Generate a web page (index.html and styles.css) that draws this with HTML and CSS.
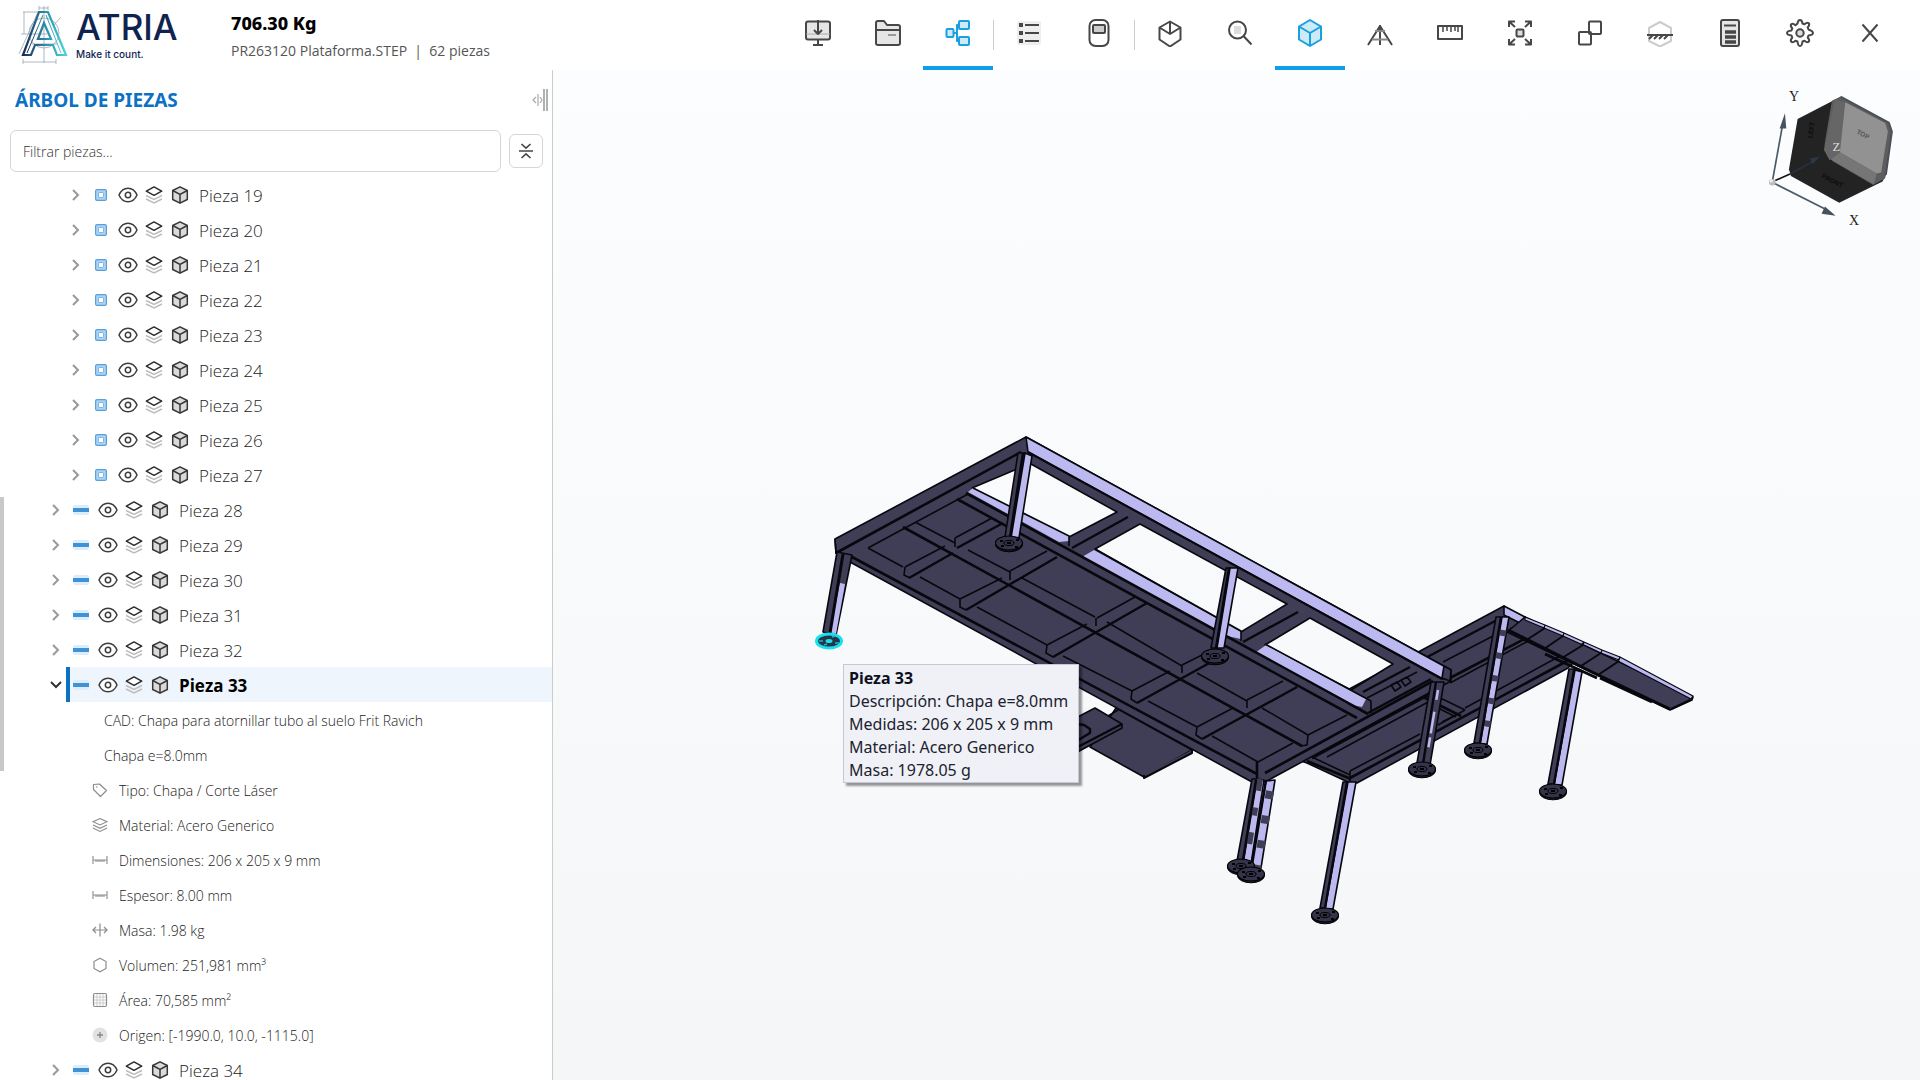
FILE: index.html
```html
<!DOCTYPE html>
<html lang="es">
<head>
<meta charset="utf-8">
<title>ATRIA – Plataforma</title>
<link rel="stylesheet" href="styles.css">
</head>
<body>
<svg class="sprite" aria-hidden="true">
  <symbol id="chev" viewBox="0 0 12 12"><path d="M3 1l5 5-5 5" fill="none" stroke="#999" stroke-width="2"/></symbol>
  <symbol id="chev-open" viewBox="0 0 12 12"><path d="M1 3l5 5 5-5" fill="none" stroke="#333" stroke-width="2"/></symbol>
  <symbol id="tube" viewBox="0 0 12 12"><rect x=".6" y=".6" width="10.8" height="10.8" rx="1.5" fill="#a9d3f7" stroke="#5b9fd6" stroke-width="1.2"/><rect x="3.5" y="3.5" width="5" height="5" rx=".6" fill="#fff" stroke="#7db6e6"/></symbol>
  <symbol id="plate" viewBox="0 0 16 10"><rect width="16" height="10" rx="2" fill="#dceefb"/><rect y="3" width="16" height="4" fill="#3f92d6"/></symbol>
  <symbol id="eye" viewBox="0 0 20 16"><path d="M1 8C5-1 15-1 19 8 15 17 5 17 1 8z" fill="#fff" stroke="#3c3c3c" stroke-width="1.5"/><circle cx="10" cy="8" r="2.7" fill="none" stroke="#3c3c3c" stroke-width="1.5"/></symbol>
  <symbol id="layers" viewBox="0 0 18 18"><path d="M1 9.500l8 4 8-4M1 13l8 4 8-4" fill="none" stroke="#bdbdbd" stroke-width="1.400"/><path d="M9 .9l7.700 4.300L9 9.300 1.300 5.200z" fill="#fff" stroke="#2c2c2c" stroke-width="1.500" stroke-linejoin="round"/></symbol>
  <symbol id="cube" viewBox="0 0 18 18"><path d="M9 .8l7.300 3.700v9L9 17.200l-7.300-3.700v-9z" fill="#dadada" stroke="#363636" stroke-width="1.500" stroke-linejoin="round"/><path d="M1.700 4.500L9 8.300l7.300-3.800M9 8.300v8.900" fill="none" stroke="#363636" stroke-width="1.500"/></symbol>
  <symbol id="tag" viewBox="0 0 16 16"><path d="M1.500 2.500v5l7 7 6-6-7-6.500z" fill="none" stroke="#8c8c8c" stroke-width="1.200" stroke-linejoin="round"/><circle cx="4.800" cy="5" r=".7" fill="#8c8c8c"/></symbol>
  <symbol id="stack" viewBox="0 0 16 16"><path d="M8 1.500l7 3.200-7 3.300-7-3.300zM1 8l7 3.300L15 8M1 11l7 3.500 7-3.500" fill="none" stroke="#8c8c8c" stroke-width="1.100"/></symbol>
  <symbol id="dim" viewBox="0 0 16 16"><path d="M1 4v8M15 4v8M1 8h14M4 8v2M6 8v2M8 8v2M10 8v2M12 8v2" fill="none" stroke="#8c8c8c" stroke-width="1.100"/></symbol>
  <symbol id="mass" viewBox="0 0 16 16"><path d="M8 1.500v13M1 8h14M4 5L1 8l3 3M12 5l3 3-3 3" fill="none" stroke="#8c8c8c" stroke-width="1.200"/></symbol>
  <symbol id="hex" viewBox="0 0 16 16"><path d="M8 1.200l6 3.300v7l-6 3.300-6-3.300v-7z" fill="none" stroke="#8c8c8c" stroke-width="1.200"/></symbol>
  <symbol id="grid" viewBox="0 0 16 16"><path d="M5 2v12M8 2v12M11 2v12M2 5h12M2 8h12M2 11h12" stroke="#ccc" stroke-width="1"/><rect x="1.500" y="1.500" width="13" height="13" rx="1.500" fill="none" stroke="#8c8c8c" stroke-width="1.200"/></symbol>
  <symbol id="origin" viewBox="0 0 16 16"><circle cx="8" cy="8" r="7.500" fill="#e2e2e2"/><path d="M8 5v6M5 8h6" stroke="#888" stroke-width="1.300"/></symbol>
  <symbol id="flange" viewBox="-16 -10 32 20"><ellipse cy="1.500" rx="13.500" ry="7.300" fill="#1b1a2a" stroke="#000"/><ellipse rx="13.500" ry="7" fill="#35334a" stroke="#000" stroke-width="1.200"/><ellipse rx="5" ry="2.500" fill="none" stroke="#000"/><path d="M-2 0h4M-9-2h3M7-3h3M-8 3h3M6 4h3" stroke="#000" stroke-width="2"/></symbol>
</svg>

<header class="topbar">
  <a class="brand" href="#" aria-label="ATRIA">
    <svg class="mark" viewBox="0 0 50 58" fill="none">
      <defs><linearGradient id="lg" x1="0" x2="1"><stop offset="0" stop-color="#1d2c55"/><stop offset=".5" stop-color="#2b8aa8"/><stop offset="1" stop-color="#4ed3da"/></linearGradient></defs>
      <g stroke="#9aa5b2" stroke-width=".8"><path d="M5 6h17M6 6v22M3 28h26M26 0v57M21 2h9M21 0v4M30 0v4M5 53v5M38 53v5M5 56h33M1 48L20 6M14 38h26M43 11L35 20"/><circle cx="26" cy="27" r="15"/></g>
      <path d="M21 6h9l18 43h-9l-4-10H17l-4 10H5zM26 17l-6 16h13z" stroke="url(#lg)" stroke-width="2.200"/>
      <path d="M25 9L9 47M28 9l15 38" stroke="url(#lg)"/>
    </svg>
    <span class="wordmark"><strong>ATRIA</strong><small>Make it count.</small></span>
  </a>
  <div class="summary"><h1>706.30 Kg</h1><p>PR263120 Plataforma.STEP&nbsp; |&nbsp; 62 piezas</p></div>
  <nav class="tools">
    <button aria-label="Importar"><svg viewBox="0 0 28 28"><rect x="2" y="2.500" width="24" height="18" rx="2" fill="#e6e6e6"/><path d="M2 15h24" stroke="#aaa" stroke-width="1"/><path d="M14 1v14M10 11l4 4 4-4M14 21v5M9 26h10"/></svg></button>
    <button aria-label="Abrir"><svg viewBox="0 0 28 28"><path d="M2 4q0-2 2-2h6l3 4h11q2 0 2 2v16q0 2-2 2H4q-2 0-2-2z" fill="#e6e6e6"/><path d="M2 11h24"/><path d="M14 16h8" stroke="#999"/></svg></button>
    <button class="on" aria-label="Árbol"><svg viewBox="0 0 28 28"><g fill="#cdeaf9"><rect x="2.500" y="10" width="7" height="8" rx="1"/><rect x="15" y="2" width="10" height="8" rx="1"/><rect x="15" y="18" width="10" height="8" rx="1"/></g><path d="M9 14h4M15 6h-2v16h2"/></svg></button>
    <i></i>
    <button aria-label="Lista"><svg viewBox="0 0 28 28"><rect x="2" y="2" width="24" height="24" rx="2" fill="#eee" stroke="none"/><path d="M10 6h14M10 14h14M10 22h14"/><path d="M4 6h4M4 14h4M4 22h4" stroke-width="4"/></svg></button>
    <button aria-label="Báscula"><svg viewBox="0 0 28 28"><rect x="4.500" y="1" width="19" height="26" rx="6"/><rect x="8" y="6" width="12" height="8" rx="1" fill="#ccc"/></svg></button>
    <i></i>
    <button aria-label="Vista 3D"><svg viewBox="0 0 28 28"><path d="M14 2.500l10.500 6v12L14 27.500 3.500 20.500v-12zM3.500 8.500L14 15l10.500-6.500M14 2.500V15"/></svg></button>
    <button aria-label="Buscar"><svg viewBox="0 0 28 28"><rect x="8" y="7" width="7" height="8" fill="#ddd" stroke="none"/><circle cx="11.500" cy="11" r="8.500"/><path d="M17.500 17l8 8.500"/></svg></button>
    <button class="on" aria-label="Cubo"><svg viewBox="0 0 28 28"><path d="M14 1l11 6.500v13L14 27 3 20.500v-13z" fill="#cdeaf9"/><path d="M3 7.500L14 14l11-6.500M14 14v13"/></svg></button>
    <button aria-label="Perspectiva"><svg viewBox="0 0 28 28"><path d="M14 6v20M14 7L2 26M14 7l12 19"/><path d="M6 20.500h16M9 12h10" stroke="#888"/></svg></button>
    <button aria-label="Medir"><svg viewBox="0 0 28 28"><rect x="2" y="7" width="24" height="13"/><path d="M7 7v6M11 7v5M15 7v6M19 7v5M22 7v6" stroke-width="1.500"/></svg></button>
    <button aria-label="Ajustar"><svg viewBox="0 0 28 28"><rect x="10.500" y="10.500" width="7" height="7" rx="1" fill="#ddd"/><path d="M9 8L3 2.500M3 8V2.500h6M19 8l6-5.500M19 2.500h6V8M9 20l-6 5.500M3 20v5.500h6M19 20l6 5.500M25 20v5.500h-6"/></svg></button>
    <button aria-label="Explosionar"><svg viewBox="0 0 28 28"><rect x="13" y="2.500" width="12" height="12.500" rx="1"/><rect x="3" y="13" width="12" height="12.500" rx="1"/></svg></button>
    <button aria-label="Sección"><svg viewBox="0 0 28 28"><path d="M14 3l11 6v13l-11 5.500L3 22V9z" stroke="#ccc"/><path d="M1 16h26M3 20l4-4M8 20l4-4M13 20l4-4M18 20l4-4"/></svg></button>
    <button aria-label="Calcular"><svg viewBox="0 0 28 28"><rect x="5" y="1" width="18" height="26" rx="2" fill="#e6e6e6"/><path d="M8 6.500h12"/><path d="M9 13h11M9 18h11M9 23h11" stroke-width="3.500"/></svg></button>
    <button aria-label="Ajustes"><svg viewBox="0 0 28 28"><path d="M11.500 4.500Q12 1 14 1t2.500 3.500l2 .8q2.800-2.400 4.200-1t-1 4.200l.8 2Q27 12 27 14t-4.500 2.500l-.8 2q2.400 2.800 1 4.200t-4.200-1l-2 .8Q16 27 14 27t-2.500-4.500l-2-.8q-2.800 2.400-4.200 1t1-4.200l-.8-2Q1 16 1 14t4.500-2.500l.8-2q-2.400-2.800-1-4.200t4.200 1z"/><circle cx="14" cy="14" r="3.700" fill="#ddd"/></svg></button>
    <button aria-label="Cerrar"><svg viewBox="0 0 28 28"><path d="M6.500 5.500l15 17M21.500 5.500l-15 17"/></svg></button>
  </nav>
</header>

<main class="work">
  <aside class="panel">
    <div class="panel-head"><h2>ÁRBOL DE PIEZAS</h2>
      <svg class="grip" viewBox="0 0 16 24"><path d="M4 9L1 12l3 3M6 6v12M8 9l2 3-2 3" fill="none" stroke="#aaa" stroke-width="1.200"/><path d="M12 1v22M15 1v22" stroke="#b0b0b0" stroke-width="2"/></svg></div>
    <div class="filter">
      <input type="text" placeholder="Filtrar piezas..." aria-label="Filtrar piezas">
      <button aria-label="Contraer todo"><svg viewBox="0 0 16 16"><path d="M1 8h14M3.500 1L8 5.200 12.500 1M3.500 15L8 10.800l4.500 4.200" fill="none" stroke="#444" stroke-width="1.600"/></svg></button>
    </div>
    <div class="scroll"></div>
    <ul class="tree">
      <li class="row deep"><button class="tw" aria-label="Expandir"><svg><use href="#chev"/></svg></button><span class="item"><svg class="type"><use href="#tube"/></svg><svg class="eye"><use href="#eye"/></svg><svg class="ic"><use href="#layers"/></svg><svg class="ic"><use href="#cube"/></svg><span class="name">Pieza 19</span></span></li>
      <li class="row deep"><button class="tw" aria-label="Expandir"><svg><use href="#chev"/></svg></button><span class="item"><svg class="type"><use href="#tube"/></svg><svg class="eye"><use href="#eye"/></svg><svg class="ic"><use href="#layers"/></svg><svg class="ic"><use href="#cube"/></svg><span class="name">Pieza 20</span></span></li>
      <li class="row deep"><button class="tw" aria-label="Expandir"><svg><use href="#chev"/></svg></button><span class="item"><svg class="type"><use href="#tube"/></svg><svg class="eye"><use href="#eye"/></svg><svg class="ic"><use href="#layers"/></svg><svg class="ic"><use href="#cube"/></svg><span class="name">Pieza 21</span></span></li>
      <li class="row deep"><button class="tw" aria-label="Expandir"><svg><use href="#chev"/></svg></button><span class="item"><svg class="type"><use href="#tube"/></svg><svg class="eye"><use href="#eye"/></svg><svg class="ic"><use href="#layers"/></svg><svg class="ic"><use href="#cube"/></svg><span class="name">Pieza 22</span></span></li>
      <li class="row deep"><button class="tw" aria-label="Expandir"><svg><use href="#chev"/></svg></button><span class="item"><svg class="type"><use href="#tube"/></svg><svg class="eye"><use href="#eye"/></svg><svg class="ic"><use href="#layers"/></svg><svg class="ic"><use href="#cube"/></svg><span class="name">Pieza 23</span></span></li>
      <li class="row deep"><button class="tw" aria-label="Expandir"><svg><use href="#chev"/></svg></button><span class="item"><svg class="type"><use href="#tube"/></svg><svg class="eye"><use href="#eye"/></svg><svg class="ic"><use href="#layers"/></svg><svg class="ic"><use href="#cube"/></svg><span class="name">Pieza 24</span></span></li>
      <li class="row deep"><button class="tw" aria-label="Expandir"><svg><use href="#chev"/></svg></button><span class="item"><svg class="type"><use href="#tube"/></svg><svg class="eye"><use href="#eye"/></svg><svg class="ic"><use href="#layers"/></svg><svg class="ic"><use href="#cube"/></svg><span class="name">Pieza 25</span></span></li>
      <li class="row deep"><button class="tw" aria-label="Expandir"><svg><use href="#chev"/></svg></button><span class="item"><svg class="type"><use href="#tube"/></svg><svg class="eye"><use href="#eye"/></svg><svg class="ic"><use href="#layers"/></svg><svg class="ic"><use href="#cube"/></svg><span class="name">Pieza 26</span></span></li>
      <li class="row deep"><button class="tw" aria-label="Expandir"><svg><use href="#chev"/></svg></button><span class="item"><svg class="type"><use href="#tube"/></svg><svg class="eye"><use href="#eye"/></svg><svg class="ic"><use href="#layers"/></svg><svg class="ic"><use href="#cube"/></svg><span class="name">Pieza 27</span></span></li>
      <li class="row"><button class="tw" aria-label="Expandir"><svg><use href="#chev"/></svg></button><span class="item"><svg class="type flat"><use href="#plate"/></svg><svg class="eye"><use href="#eye"/></svg><svg class="ic"><use href="#layers"/></svg><svg class="ic"><use href="#cube"/></svg><span class="name">Pieza 28</span></span></li>
      <li class="row"><button class="tw" aria-label="Expandir"><svg><use href="#chev"/></svg></button><span class="item"><svg class="type flat"><use href="#plate"/></svg><svg class="eye"><use href="#eye"/></svg><svg class="ic"><use href="#layers"/></svg><svg class="ic"><use href="#cube"/></svg><span class="name">Pieza 29</span></span></li>
      <li class="row"><button class="tw" aria-label="Expandir"><svg><use href="#chev"/></svg></button><span class="item"><svg class="type flat"><use href="#plate"/></svg><svg class="eye"><use href="#eye"/></svg><svg class="ic"><use href="#layers"/></svg><svg class="ic"><use href="#cube"/></svg><span class="name">Pieza 30</span></span></li>
      <li class="row"><button class="tw" aria-label="Expandir"><svg><use href="#chev"/></svg></button><span class="item"><svg class="type flat"><use href="#plate"/></svg><svg class="eye"><use href="#eye"/></svg><svg class="ic"><use href="#layers"/></svg><svg class="ic"><use href="#cube"/></svg><span class="name">Pieza 31</span></span></li>
      <li class="row"><button class="tw" aria-label="Expandir"><svg><use href="#chev"/></svg></button><span class="item"><svg class="type flat"><use href="#plate"/></svg><svg class="eye"><use href="#eye"/></svg><svg class="ic"><use href="#layers"/></svg><svg class="ic"><use href="#cube"/></svg><span class="name">Pieza 32</span></span></li>
      <li class="row sel"><button class="tw" aria-label="Contraer"><svg><use href="#chev-open"/></svg></button><span class="item"><svg class="type flat"><use href="#plate"/></svg><svg class="eye"><use href="#eye"/></svg><svg class="ic"><use href="#layers"/></svg><svg class="ic"><use href="#cube"/></svg><span class="name">Pieza 33</span></span></li>
      <li class="note">CAD: Chapa para atornillar tubo al suelo Frit Ravich<br>Chapa e=8.0mm</li>
      <li class="prop"><svg><use href="#tag"/></svg>Tipo: Chapa / Corte Láser</li>
      <li class="prop"><svg><use href="#stack"/></svg>Material: Acero Generico</li>
      <li class="prop"><svg><use href="#dim"/></svg>Dimensiones: 206 x 205 x 9 mm</li>
      <li class="prop"><svg><use href="#dim"/></svg>Espesor: 8.00 mm</li>
      <li class="prop"><svg><use href="#mass"/></svg>Masa: 1.98 kg</li>
      <li class="prop"><svg><use href="#hex"/></svg>Volumen: 251,981 mm³</li>
      <li class="prop"><svg><use href="#grid"/></svg>Área: 70,585 mm²</li>
      <li class="prop"><svg><use href="#origin"/></svg>Origen: [-1990.0, 10.0, -1115.0]</li>
      <li class="row"><button class="tw" aria-label="Expandir"><svg><use href="#chev"/></svg></button><span class="item"><svg class="type flat"><use href="#plate"/></svg><svg class="eye"><use href="#eye"/></svg><svg class="ic"><use href="#layers"/></svg><svg class="ic"><use href="#cube"/></svg><span class="name">Pieza 34</span></span></li>
    </ul>
  </aside>

  <section class="view">
    <svg class="scene" viewBox="553 70 1367 1010" preserveAspectRatio="xMidYMid meet">
      <g stroke="#07070d" stroke-width="1.600" stroke-linejoin="round" fill="#403e56">
        <!-- lower step -->
        <path d="M1116 708l76 42-48 27-54-30z"/><path d="M1192 750v3l-48 25v-3" stroke-width="2"/>
        <path d="M1095 708l27 16v4l-52 28v-35z"/><path d="M1122 724l-52 27M1070 723l14 2 6 4v4l-20 12" stroke-width="2.400" fill="none"/><path d="M1108 716l10-6" fill="none"/>
        <!-- secondary platform -->
        <path d="M1504 606L1340 694l-54 62 21 7 43 20h7l211-115 20-20-80-36z"/>
        <g fill="none"><path d="M1497 620L1352 697" stroke-width="2.400"/>
        <path d="M1443 662l52-27M1350 771l70-37M1438 725l27-15M1465 708l95-52M1327 757l103-56M1350 771v10M1312 757l38 18M1450 683l80-43M1430 693l35 17M1430 704l26 13"/>
        <path d="M1307 761l44 18M1312 758l118-64M1350 778l217-117M1423 697l38 19M1450 678l80-42" stroke-width="2.600"/><path d="M1442 722l14-7M1510 628l20 10" /></g>
        <!-- main platform and railing -->
        <path fill-rule="evenodd" d="M835 539L1026 437 1451 670v11L1265 782h-13L850 562l-14-9zM972 488L1017 469 1031 464 1117 512 1069 537zM1140 524L1287 604 1241 632 1095 549zM1310 618L1393 664 1351 690 1265 645z"/>
        <path fill="#bcb9f0" d="M1026 437L1451 670 1443 679 1028 452z"/>
        <path d="M1444 666l7 4-1 11-8-3z"/>
        <g fill="#bcb9f0" stroke="none"><path d="M973 488l96 48v5l-10 1-91-50zM1094 550l147 82v7l-14-3-145-79zM1266 645l100 54-4 8-15-3-92-51z"/></g>
        <g fill="none">
          <path d="M973 488l96 48v10M1095 549l146 82v10M1265 644l106 57v12"/>
          <path stroke-width="2.600" d="M966 493l402 221M957 499l400 219M836 553L1021 452M852 557l405 217M903 527l399 219M1265 773l168-92M1257 762v18"/>
          <path stroke-width="2" d="M1028 452l414 227"/>
          <path d="M835 539l1 15M868 548l100-54M868 548l35 19M920 577l40 22M977 607l70 38M1063 656l69 35M1148 701l49 26M1212 736l46 26M915 522l40 21M968 550l42 22M1022 578l73 39M1107 622l75 44M1197 673l50 28M1262 708l46 27M1258 762l35-19M1308 735l39-20"/>
          <path d="M905 567l40-21M955 538l37-20M960 599l42-21M1010 571l37-20M1047 645l40-21M1097 618l38-21M1132 691l38-20M1182 665l24-12M1197 727l36-19M1247 700l36-19M955 538v9M1010 571v9M1096 618v8M1182 665v8M1247 700v8M1308 735l-1 10-6 1M905 567l-1 8 6 3M960 599v8l6 3M1047 645l-1 8 7 4M1132 691l-1 8 6 4M1197 727l-1 8 6 4"/>
          <path stroke-width="2.400" d="M909 578l44-25M957 548l46-25M966 610l91-53M1053 657l94-54M1137 703l76-42M1202 739l95-52M1072 548l56-31M1243 642l55-30M1363 692l47-25M1368 713l63-34"/>
          <path d="M1367 698l50-26M1391 685l6-3 4 5-6 4zM1401 680l6-3 4 5-6 4z"/>
        </g>
        <!-- ramp -->
        <path fill="#bcb9f0" d="M1504 606l21 11-5 6-16-8z"/>
        <path d="M1525 617l168 80-1 3-22 10-163-78z"/>
        <path fill="#bcb9f0" stroke-width="1.200" d="M1525 617l20 8-1 3-19-8zM1545 625l19 8-1 3-19-8zM1564 633l20 9-1 3-20-9zM1584 642l18 8-1 3-19-9zM1602 650l18 7-1 3-18-7zM1620 657l73 39-2 3-73-38z"/>
        <path fill="none" d="M1545 628l-20 13M1563 636l-19 13M1583 645l-21 13M1601 653l-20 13M1619 661l-21 14M1690 700l-19 9" stroke-width="2"/>
        <path fill="none" stroke-width="3" d="M1508 630l84 42 78 37"/><path d="M1545 654l52 24M1600 678l52 24" stroke-width="3"/>
        <!-- legs -->
        <path d="M837 552l-14 80 13 3 16-80z"/><path fill="#bcb9f0" stroke="none" d="M840 583l5 1-9 50-6-2z"/><path d="M843 554l-13 79" stroke-width="3"/>
        <path d="M1018 453l-13 84 7 1 13-85z"/><path fill="#bcb9f0" d="M1025 453l7 3-13 82h-8z"/><path d="M1023 453l-13 84" stroke-width="2.400"/>
        <path d="M1226 568l-15 80h6l13-80z"/><path fill="#bcb9f0" d="M1230 568h8l-14 80h-7z"/><path d="M1229 568l-13 80" stroke-width="2.400"/>
        <path d="M1431 682l-14 81 13 2 14-83z"/><path d="M1436 682l-13 82" stroke-width="2.400"/><path d="M1438 690l-10 60" stroke="#bcb9f0" stroke-width="2.500" stroke-dasharray="10 12 22 4"/>
        <path d="M1496 617l-22 126h6l22-126z"/><path fill="#bcb9f0" d="M1502 617h7l-22 127h-7z"/><path d="M1503 630l-19 112" stroke="#403e56" stroke-width="7" stroke-dasharray="6 17"/><path d="M1501 617l-21 126" stroke-width="2.400"/>
        <path d="M1569 669l-21 115h6l21-115z"/><path fill="#bcb9f0" d="M1575 670l7 2-20 113h-8z"/><path d="M1574 670l-20 114" stroke-width="2.400"/>
        <path d="M1343 782l-23 126h6l23-126z"/><path fill="#bcb9f0" d="M1348 782h8l-23 127h-8z"/><path d="M1347 782l-22 126" stroke-width="2.400"/>
        <path d="M1252 779l-15 82h7l14-82z"/><path fill="#bcb9f0" d="M1257 779l7 1-13 84h-8z"/><path d="M1260 779l-14 84" stroke="#403e56" stroke-width="6" stroke-dasharray="12 17 8 17"/>
        <path fill="#bcb9f0" d="M1266 781l9-1-14 88-10-2z"/><path d="M1270 791l-13 78" stroke="#403e56" stroke-width="8" stroke-dasharray="8 17"/><path d="M1256 780l-13 80M1266 780l-14 85" stroke-width="2.400"/>
      </g>
      <g>
        <use href="#flange" x="993" y="533" width="32" height="20"/><use href="#flange" x="1199" y="646" width="32" height="20"/><use href="#flange" x="1406" y="759" width="32" height="20"/><use href="#flange" x="1462" y="740" width="32" height="20"/><use href="#flange" x="1537" y="781" width="32" height="20"/><use href="#flange" x="1309" y="905" width="32" height="20"/><use href="#flange" x="1225" y="856" width="32" height="20"/><use href="#flange" x="1235" y="864" width="32" height="20"/>
        <ellipse cx="829" cy="641" rx="12.500" ry="7" fill="#25364a" stroke="#18e0ee" stroke-width="3"/><ellipse cx="829" cy="641" rx="3.500" ry="2" fill="#18e0ee"/><path d="M819 641h4M835 643h4M824 645l3-1M832 637l3-1" stroke="#18b8c8" stroke-width="1.500"/>
      </g>
      <!-- orientation cube -->
      <g transform="translate(1740 70) scale(.333)">
        <path d="M173 147L302 80l145 78 9 27-18 130-10 20-130 64-145-81-6-20z" fill="#232323"/>
        <path d="M276 92l26-12 145 78 9 27-20 140-36 20-120-70-28-35 4-30z" fill="#5d5d5d"/>
        <path d="M285 88l30 10-14 145-32 28-16-30z" fill="#666"/>
        <path d="M316 97l120 62 8 26-20 123-14 3-110-64z" fill="#929292"/>
        <path d="M300 247l110 64-8 32-130-74z" fill="#767676"/>
        <path d="M302 80l145 78 9 27-18 130" fill="none" stroke="#4b5058" stroke-width="6"/>
        <text class="face" transform="translate(348 190) rotate(28)">TOP</text>
        <text class="face dark" transform="translate(244 322) rotate(28)">FRONT</text>
        <text class="face dark" transform="translate(216 206) rotate(-80)">LEFT</text>
        <g stroke="#4c5a68" stroke-width="5" fill="#3f4b57"><path d="M98 330l29-160"/><path d="M104 341l150 76"/><path d="M106 332l44-20" stroke="#111"/><path d="M150 312l70-38" stroke="#27323d"/></g>
        <path d="M135 130l4 46h-20zM287 438l-42-6 10-22z" fill="#46525f"/><path d="M240 260l-30 6 8 18z" fill="#2c3844"/>
        <circle cx="97" cy="337" r="10" fill="#bbb"/><circle cx="94" cy="333" r="5" fill="#eee"/>
        <text class="axis" x="147" y="92">Y</text><text class="axis" x="327" y="464">X</text><text class="axis z" x="278" y="243">Z</text>
      </g>
    </svg>
    <div class="tip" role="tooltip"><b>Pieza 33</b><br>Descripción: Chapa e=8.0mm<br>Medidas: 206 x 205 x 9 mm<br>Material: Acero Generico<br>Masa: 1978.05 g</div>
  </section>
</main>
</body>
</html>
```
FILE: styles.css
```css
* { box-sizing: border-box; }
body { margin: 0; height: 100vh; display: flex; flex-direction: column; overflow: hidden; background: #fff; color: #333; font-family: "Open Sans", "Noto Sans", sans-serif; }
.sprite { display: none; }
button { background: none; border: 0; padding: 0; font: inherit; }
h1, h2, p, ul { margin: 0; padding: 0; }
ul { list-style: none; }

.topbar { flex: none; height: 70px; display: flex; align-items: center; padding: 0 15px 0 18px; }
.brand { display: flex; align-items: center; width: 213px; gap: 8px; text-decoration: none; color: #0f2350; font-family: Inter, sans-serif; }
.mark { width: 50px; height: 58px; }
.wordmark { display: flex; flex-direction: column; }
.wordmark strong { font-size: 35px; line-height: 42px; font-weight: 500; }
.wordmark small { font-size: 10px; line-height: 12px; font-weight: 500; margin-bottom: 4px; }
.summary { flex: 1; padding-top: 4px; }
.summary h1 { font-size: 18px; line-height: 28px; color: #000; font-family: "Noto Sans", sans-serif; font-weight: 800; }
.summary p { font-size: 14px; line-height: 28px; color: #555; }
.tools { display: flex; height: 70px; align-items: stretch; }
.tools i { width: 1px; height: 30px; margin-top: 20px; background: #ccc; }
.tools button { width: 70px; padding-top: 19px; border-bottom: 4px solid transparent; display: flex; justify-content: center; }
.tools svg { width: 28px; height: 28px; fill: none; stroke: #474747; stroke-width: 2; stroke-linejoin: round; }
.tools .on { border-color: #0f9fe8; }
.tools .on svg { stroke: #1a9fdf; }

.work { flex: 1; min-height: 0; display: flex; }
.panel { position: relative; flex: none; width: 553px; border-right: 1px solid #ccc; overflow: hidden; }
.panel-head { height: 60px; padding: 0 4px 0 15px; display: flex; align-items: center; justify-content: space-between; }
.panel-head h2 { font-size: 19px; font-family: "Noto Sans", sans-serif; font-weight: 700; color: #0b71c4; }
.grip { width: 16px; height: 24px; }
.filter { display: flex; align-items: center; gap: 8px; padding: 0 9px 0 10px; height: 42px; }
.filter input { flex: 1; height: 42px; border: 1px solid #d6d6d6; border-radius: 6px; padding: 0 12px; font: 300 14px "Open Sans", sans-serif; color: #333; }
.filter input::placeholder { color: #333; opacity: 1; }
.filter button { width: 34px; height: 34px; border: 1px solid #d6d6d6; border-radius: 6px; display: grid; place-items: center; }
.filter button svg { width: 16px; height: 16px; }
.scroll { position: absolute; left: 0; top: 427px; width: 4px; height: 274px; background: #c8c8c8; }
.tree { padding-top: 5px; font-weight: 300; color: #222; }
.row { display: flex; height: 35px; padding-left: 46px; }
.row.deep { padding-left: 66px; }
.tw { width: 20px; display: grid; place-items: center; }
.tw svg { width: 12px; height: 12px; }
.item { flex: 1; display: flex; align-items: center; border-left: 4px solid transparent; }
.type { width: 12px; height: 12px; margin: 0 8px 0 5px; }
.type.flat { width: 16px; height: 10px; margin: 0 6px 0 3px; }
.eye { width: 20px; height: 16px; margin: 0 3px; }
.ic { width: 18px; height: 18px; margin: 0 4px; }
.name { margin-left: 6px; padding-top: 2px; font-size: 17px; line-height: 22px; }
.sel .item { background: #eef5fd; border-color: #0b71c4; }
.sel .name { font-weight: 700; color: #000; }
.note, .prop { font-size: 14px; line-height: 35px; padding-top: 1px; }
.note { height: 70px; padding-left: 104px; }
.prop { height: 35px; padding-left: 92px; display: flex; align-items: center; gap: 11px; }
.prop svg { width: 16px; height: 16px; }

.view { position: relative; flex: 1; min-width: 0; background: linear-gradient(#fcfdff, #f4f6f8); }
.scene { display: block; width: 100%; height: 100%; }
.face { font: 700 20px "Liberation Sans", sans-serif; fill: #555; }
.face.dark { fill: #0c0c0c; }
.axis { font: 42px "Liberation Serif", serif; fill: #222; }
.axis.z { fill: #ddd; font-size: 38px; }
.tip { position: absolute; left: 290px; top: 594px; padding: 2px 10px 0 5px; border: 1px solid #c4c7d6; background: #eff1f6; box-shadow: 3px 3px 2px rgba(0, 0, 0, .4); font-family: "Noto Sans", sans-serif; font-size: 16px; line-height: 23px; color: #1c2230; }
.tip b { color: #0c1020; }
```
